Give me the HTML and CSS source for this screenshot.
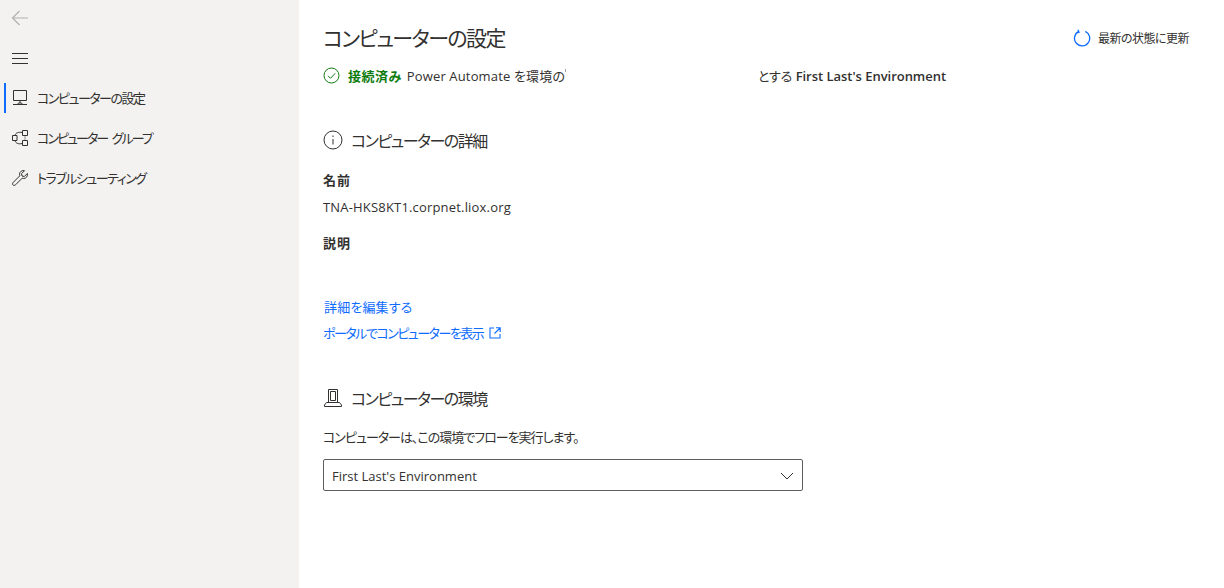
FILE: index.html
```html
<!DOCTYPE html>
<html lang="ja">
<head>
<meta charset="utf-8">
<title>コンピューターの設定</title>
<link rel="stylesheet" href="styles.css">
</head>
<body>
<div class="app">
  <aside class="sidebar">
    <div class="back">
      <svg width="20" height="16" viewBox="0 0 20 16" fill="none" stroke="#b3b0ad" stroke-width="1.2"><path d="M1.500 8H17M8.500 1L1.500 8l7 7"/></svg>
    </div>
    <div class="burger">
      <svg width="18" height="12" viewBox="0 0 18 12" fill="none" stroke="#323130" stroke-width="1"><path d="M1 1.500h16M1 6.500h16M1 11.500h16"/></svg>
    </div>
    <nav class="nav">
      <a class="nav-item active">
        <svg class="nav-icon" width="16" height="16" viewBox="0 0 16 16" fill="none" stroke="#323130" stroke-width="1"><path d="M1.500.5h13v10h-13zM8 10.500v2.500M5.500 14.500l1-1.500h3l1 1.500zM1 14.500h14"/></svg>
        <span>コンピューターの設定</span>
      </a>
      <a class="nav-item">
        <svg class="nav-icon" width="16" height="16" viewBox="0 0 16 16" fill="none" stroke="#323130" stroke-width="1"><path d="M10.500.5h5v5h-5zM10.500 10.500h5v5h-5zM.5 5.500h4.500v5H.5zM3 5.500C3.500 3 6 1.800 10.500 2.500M3 10.500c.5 2.500 3 4 7.500 3M13 6.500v1M13 8.500v1"/></svg>
        <span class="group">コンピューター グループ</span>
      </a>
      <a class="nav-item">
        <svg class="nav-icon" width="16" height="16" viewBox="0 0 16 16" fill="none" stroke="#323130" stroke-width="1"><path d="M15.300 3.500l-3 3-2.300-.5-.5-2.300 3-3C10.300 0 7.500 1.500 7.500 4.300c0 .6.100 1 .3 1.500L1.300 12.300c-1 1-.9 2.100-.3 2.700s1.700.7 2.700-.3l6.500-6.500c.5.200.9.300 1.500.3 2.800 0 4.300-2.800 3.600-5z"/></svg>
        <span>トラブルシューティング</span>
      </a>
    </nav>
  </aside>
  <main class="main">
    <header class="top">
      <h1 class="title">コンピューターの設定</h1>
      <a class="refresh">
        <svg width="18" height="18" viewBox="0 0 18 18" fill="none" stroke="#0f6cff" stroke-width="1.300"><path d="M5.500 2.600A7.600 7.600 0 1 0 12.300 2.400M5 .8l1 2.500-3 .6"/></svg>
        <span>最新の状態に更新</span>
      </a>
    </header>
    <div class="status">
      <svg class="status-icon" width="17" height="17" viewBox="0 0 17 17" fill="none" stroke="#107c10" stroke-width="1"><circle cx="8.500" cy="8.500" r="7.500"/><path d="M5 8.800l2.500 2.500L12.200 6.300"/></svg>
      <strong class="ok">接続済み</strong>
      <span class="status-a">Power Automate を環境の</span>
      <span class="status-b">とする <b class="env">First Last's Environment</b></span>
    </div>
    <section class="details">
      <h2 class="section-head">
        <svg width="20" height="20" viewBox="0 0 20 20" fill="none" stroke="#323130" stroke-width="1"><circle cx="10" cy="10" r="9"/><path d="M10 9v5.500M10 5.500v1.500"/></svg>
        <span>コンピューターの詳細</span>
      </h2>
      <div class="label first">名前</div>
      <div class="value">TNA-HKS8KT1.corpnet.liox.org</div>
      <div class="label second">説明</div>
      <a class="link edit">詳細を編集する</a>
      <a class="link portal">
        <span>ポータルでコンピューターを表示</span>
        <svg width="12" height="12" viewBox="0 0 12 12" fill="none" stroke="#0f6cff" stroke-width="1.100"><path d="M5 1H1v10h10V7M7 .8h4.200V5M11 1L5.500 6.500"/></svg>
      </a>
    </section>
    <section class="environment">
      <h2 class="section-head">
        <svg width="20" height="20" viewBox="0 0 20 20" fill="none" stroke="#323130" stroke-width="1"><path d="M5.500 14.500V1.500h9v13M7.500 3.500h5v9h-5zM1.500 18.500v-1.500l2-2.500h13l2 2.500v1.500z"/></svg>
        <span>コンピューターの環境</span>
      </h2>
      <p class="desc">コンピューターは、この環境でフローを実行します。</p>
      <div class="select">
        <span>First Last's Environment</span>
        <svg width="14" height="8" viewBox="0 0 14 8" fill="none" stroke="#323130" stroke-width="1"><path d="M1 1l6 6 6-6"/></svg>
      </div>
    </section>
  </main>
</div>
</body>
</html>
```
FILE: styles.css
```css
* { box-sizing: border-box; }
html, body { margin: 0; height: 100%; }
body {
  background: #fff;
  color: #323130;
  font-family: "Open Sans", "Noto Sans CJK JP", sans-serif;
  font-size: 13px;
  font-feature-settings: "palt";
  overflow: hidden;
}
.app { display: flex; height: 588px; }
.sidebar { flex: 0 0 299px; background: #f3f2f1; padding-top: 10px; }
.back { height: 16px; padding-left: 11px; display: flex; }
.burger { height: 12px; margin-top: 26px; padding-left: 11px; display: flex; }
.nav { margin-top: 19px; }
.nav-item {
  display: flex;
  align-items: center;
  height: 30px;
  margin-bottom: 10px;
  margin-left: 4px;
  padding-left: 6px;
  gap: 9px;
  font-size: 13px;
  letter-spacing: -1.5px;
  border-left: 2px solid transparent;
}
.nav-item span { padding-bottom: 2px; }
.nav-item .group { letter-spacing: -1.95px; word-spacing: 3px; }
.nav-item.active { border-left-color: #0f6cff; }
.main { flex: 1; padding: 0 35px 0 24px; }
.top { display: flex; justify-content: space-between; align-items: center; height: 40px; margin-top: 18px; }
.title { margin: 0; font-size: 21px; font-weight: 400; line-height: 40px; letter-spacing: -1.6px; }
.refresh { display: flex; align-items: center; gap: 7px; font-size: 12px; letter-spacing: -.5px; }
.status { display: flex; align-items: center; margin-top: 7px; height: 20px; }
.status-icon { margin-right: 8px; }
.ok { color: #107c10; font-weight: 700; margin-right: 5px; letter-spacing: .5px; }
.status-a { position: relative; width: 351px; letter-spacing: .15px; }
.status-a::after {
  content: "";
  position: absolute;
  left: 158px;
  top: 3px;
  width: 1px;
  height: 3px;
  background: #a19f9d;
}
.env { font-weight: 600; letter-spacing: -.03px; }
.details { margin-top: 43px; }
.section-head {
  display: flex; align-items: center; gap: 8px;
  margin: 0; font-size: 16px; font-weight: 400; height: 24px; letter-spacing: -1.5px;
}
.label { font-weight: 600; line-height: 20px; letter-spacing: 1px; }
.label.first { margin-top: 18px; }
.value { margin-top: 7px; line-height: 20px; letter-spacing: .18px; }
.label.second { margin-top: 16px; }
.link { display: block; color: #0f6cff; line-height: 20px; }
.edit { margin-top: 44px; padding-left: 1px; letter-spacing: .15px; }
.portal { display: flex; align-items: center; gap: 6px; margin-top: 6px; letter-spacing: -1.5px; }
.environment { margin-top: 43px; }
.desc { margin: 17px 0 0; line-height: 20px; letter-spacing: -1px; }
.select {
  display: flex; align-items: center; justify-content: space-between;
  width: 480px; height: 32px; margin-top: 12px; padding: 1px 8px 0;
  border: 1px solid #605e5c; border-radius: 2px;
}
```
